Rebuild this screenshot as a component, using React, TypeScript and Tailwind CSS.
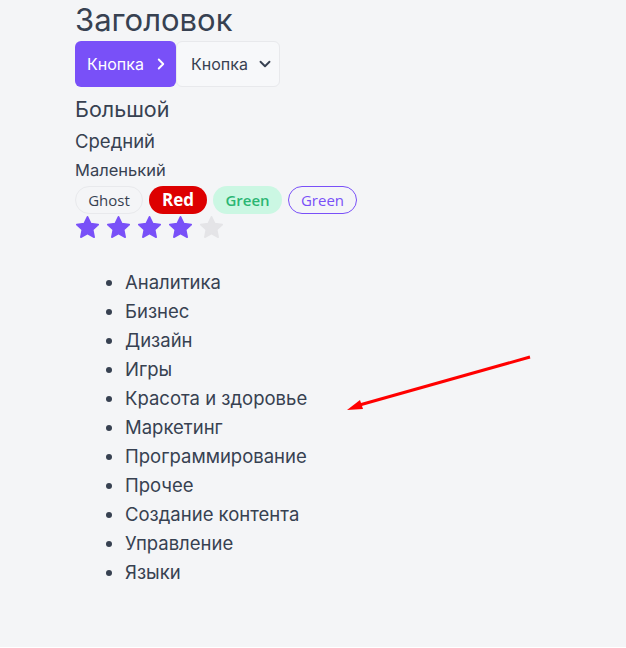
import { ChevronRight, ChevronDown } from 'lucide-react';

const categories = [
  'Аналитика',
  'Бизнес',
  'Дизайн',
  'Игры',
  'Красота и здоровье',
  'Маркетинг',
  'Программирование',
  'Прочее',
  'Создание контента',
  'Управление',
  'Языки',
];

const Star = ({ filled }: { filled: boolean }) => (
  <svg width="27" height="27" viewBox="0 0 24 24" className={filled ? 'text-[#7950f8]' : 'text-[#e4e4e7]'}>
    <path
      fill="currentColor"
      stroke="currentColor"
      strokeWidth="1.5"
      strokeLinejoin="round"
      d="M12 2.5l2.9 6.1 6.6.8-4.9 4.6 1.3 6.6L12 17.3l-5.9 3.3 1.3-6.6-4.9-4.6 6.6-.8z"
    />
  </svg>
);

const App = (): JSX.Element => (
  <div className="relative min-h-[648px] bg-[#f4f5f7] font-['Inter',sans-serif] text-[#374151]">
    <div className="pl-[75px]">
      <h1 className="text-[31px] leading-[42px] -mt-[1px]">Заголовок</h1>
      <div className="flex">
        <button className="flex items-center gap-2 h-[46px] w-[101px] pl-3 rounded-md bg-[#7950f8] text-white text-[16px]">
          Кнопка
          <ChevronRight size={18} strokeWidth={2.5} />
        </button>
        <button className="flex items-center gap-2 h-[46px] w-[104px] pl-[14px] rounded-md border border-[#e8e9ec] bg-[#f7f8fa] text-[16px]">
          Кнопка
          <ChevronDown size={18} strokeWidth={2.5} />
        </button>
      </div>
      <p className="text-[21.5px] leading-[32px] mt-[6px]">Большой</p>
      <p className="text-[18.5px] leading-[32px]">Средний</p>
      <p className="text-[16.5px] leading-[30px] -mt-[2px]">Маленький</p>
      <div className="flex gap-[6px] mt-[1px] font-['Open_Sans',sans-serif] text-[15px]">
        <span className="flex items-center justify-center h-[28px] w-[68px] rounded-full border border-[#e8e9ec]">Ghost</span>
        <span className="flex items-center justify-center h-[28px] w-[58px] rounded-full bg-[#dd0000] text-white font-bold text-[17px]">Red</span>
        <span className="flex items-center justify-center h-[28px] w-[69px] rounded-full bg-[#cbf7e3] text-[#2bb673] font-semibold">Green</span>
        <span className="flex items-center justify-center h-[28px] w-[69px] rounded-full border border-[#7950f8] text-[#7950f8]">Green</span>
      </div>
      <div className="flex gap-[4px] -ml-[1px]">
        {[0, 1, 2, 3, 4].map((i) => (
          <Star key={i} filled={i < 4} />
        ))}
      </div>
      <ul className="list-disc pl-[50px] mt-[27px] text-[18.5px] leading-[29px]">
        {categories.map((c) => (
          <li key={c}>{c}</li>
        ))}
      </ul>
    </div>
    <svg className="absolute left-0 top-0" width="626" height="648">
      <line x1="530" y1="358" x2="356" y2="407" stroke="#ff0000" strokeWidth="3" />
      <polygon points="347,411 360,401 363,410" fill="#ff0000" />
    </svg>
  </div>
);

export default App;
